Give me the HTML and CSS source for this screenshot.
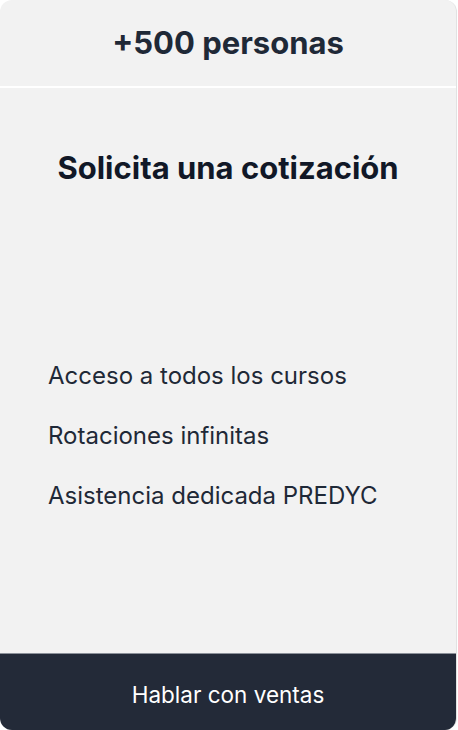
FILE: index.html
```html
<!DOCTYPE html>
<html lang="es">
<head>
<meta charset="utf-8">
<link rel="stylesheet" href="styles.css">
</head>
<body>
<div class="card">
  <div class="card-header">
    <h2 class="audience">+500 personas</h2>
  </div>
  <div class="card-body">
    <h3 class="plan-title">Solicita una cotización</h3>
    <ul class="features">
      <li>Acceso a todos los cursos</li>
      <li>Rotaciones infinitas</li>
      <li>Asistencia dedicada PREDYC</li>
    </ul>
  </div>
  <button class="cta">Hablar con ventas</button>
</div>
</body>
</html>
```
FILE: styles.css
```css
* { box-sizing: border-box; }
html, body { margin: 0; padding: 0; background: #ffffff; }
body { font-family: Inter, "Noto Sans", sans-serif; }
.card {
  width: 457px;
  height: 730px;
  background: #f2f2f2;
  border-radius: 12px;
  overflow: hidden;
  display: flex;
  flex-direction: column;
  border-right: 1px solid #e2e2e2;
}
.card-header {
  height: 88px;
  display: flex;
  align-items: center;
  justify-content: center;
  border-bottom: 2px solid #ffffff;
  flex: none;
  padding-bottom: 1px;
}
.audience {
  margin: 0;
  font-size: 31px;
  line-height: 36px;
  font-weight: 700;
  color: #1f2937;
}
.card-body {
  flex: 1;
  padding: 62px 48px 0;
}
.plan-title {
  margin: 0;
  text-align: center;
  font-size: 31px;
  line-height: 36px;
  font-weight: 700;
  color: #111827;
}
.features {
  list-style: none;
  margin: 175px 0 0;
  padding: 0;
  display: flex;
  flex-direction: column;
  gap: 30px;
}
.features li {
  font-size: 24px;
  line-height: 30px;
  color: #1f2937;
}
.cta {
  flex: none;
  height: 77px;
  border: 0;
  border-top: 1px solid #8b9099;
  background: #232a38;
  color: #ffffff;
  font-family: inherit;
  font-size: 22.5px;
  padding: 4px 0 0;
}
```
